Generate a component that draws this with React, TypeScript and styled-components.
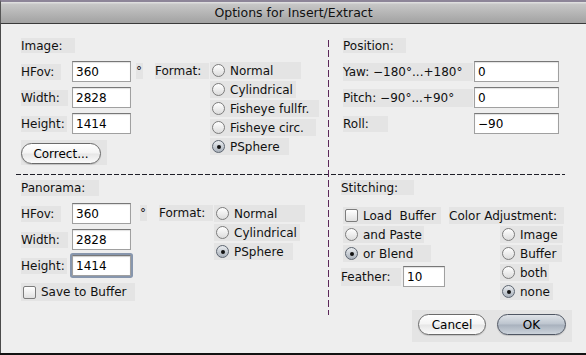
import styled, { createGlobalStyle } from 'styled-components';

const GlobalStyle = createGlobalStyle`
  html, body { margin: 0; padding: 0; background: #141414; }
  body { font-family: "DejaVu Sans", "Liberation Sans", sans-serif; font-size: 12px; color: #111; }
  * { box-sizing: border-box; }
`;

const Window = styled.div`
  width: 586px;
  height: 355px;
  display: flex;
  flex-direction: column;
  background: #121212;
  overflow: hidden;
`;

const TitleBar = styled.div`
  height: 24px;
  flex: none;
  border-top: 2px solid #8d8598;
  border-bottom: 1px solid #3a3a3a;
  border-left: 1px solid #555;
  background: linear-gradient(#e4e4e4, #c6c6c6 12%, #a2a2a2);
  display: flex;
  align-items: center;
  justify-content: center;
  font-size: 12.5px;
  color: #111;
`;

const Body = styled.div`
  height: 329px;
  flex: none;
  background: #eeeeee;
  border-left: 1px solid #4a4a4a;
  padding: 14px 14px 0 15px;
  display: grid;
  grid-template-columns: 312px 1px 1fr;
  grid-template-rows: 130px 12px 130px 32px;
`;

const Section = styled.div<{ $col: number; $row: number; $pad: number }>`
  grid-column: ${(p) => p.$col};
  grid-row: ${(p) => p.$row};
  padding-left: ${(p) => p.$pad}px;
  display: flex;
  flex-direction: column;
  align-items: flex-start;
`;

const VLine = styled.div`
  grid-column: 2;
  grid-row: 1 / 4;
  margin: 2px 0 -5px;
  background: repeating-linear-gradient(180deg, #5a2558 0 7px, transparent 7px 10px);
  position: relative;
  z-index: 1;
`;

const HLine = styled.div`
  grid-column: 1 / 4;
  grid-row: 2;
  align-self: center;
  height: 1px;
  margin-right: 7px;
  background: repeating-linear-gradient(90deg, #1e1e28 0 5px, transparent 5px 7px);
`;

const Box = styled.span<{ $w: number; $h?: number }>`
  display: inline-flex;
  align-items: center;
  flex: none;
  width: ${(p) => p.$w}px;
  height: ${(p) => p.$h ?? 16}px;
  background: #e4e4e4;
  white-space: pre;
`;

const FormRow = styled.div<{ $top: number }>`
  display: flex;
  align-items: flex-start;
  margin-top: ${(p) => p.$top}px;
`;

const Column = styled.div<{ $gap: number; $left?: number }>`
  display: flex;
  flex-direction: column;
  align-items: flex-start;
  gap: ${(p) => p.$gap}px;
  margin-left: ${(p) => p.$left ?? 0}px;
`;

const FieldRow = styled.div`
  display: flex;
  align-items: center;
  height: 21px;
`;

const LabelCell = styled.div<{ $w: number }>`
  width: ${(p) => p.$w}px;
  flex: none;
  display: flex;
`;

const TextInput = styled.input<{ $w: number; $focus?: boolean }>`
  width: ${(p) => p.$w}px;
  height: 21px;
  padding: 0 3px;
  font: inherit;
  color: #000;
  background: #fff;
  border: 1px solid #a0a0a0;
  border-top-color: #777;
  box-shadow: ${(p) =>
    p.$focus ? '0 0 0 2px #8796ad, inset 0 1px 1px rgba(0,0,0,0.2)' : 'inset 0 1px 1px rgba(0,0,0,0.12)'};
  outline: none;
  border-radius: ${(p) => (p.$focus ? '1px' : '0')};
`;

const Mark = styled(Box)`
  margin-top: 2px;
`;

const RadioRow = styled.div<{ $w: number }>`
  display: flex;
  align-items: center;
  gap: 5px;
  width: ${(p) => p.$w}px;
  height: 17px;
  padding-left: 2px;
  background: #e4e4e4;
  white-space: pre;
`;

const Radio = styled.span<{ $on?: boolean }>`
  width: 13px;
  height: 13px;
  flex: none;
  border-radius: 50%;
  border: 1px solid ${(p) => (p.$on ? '#5c6470' : '#7c7c7c')};
  background: ${(p) =>
    p.$on ? 'linear-gradient(#e9ecef, #a9b1bb)' : 'linear-gradient(#ffffff, #dcdcdc)'};
  display: flex;
  align-items: center;
  justify-content: center;
  &::after {
    content: '';
    width: 4px;
    height: 4px;
    border-radius: 50%;
    background: #111;
    display: ${(p) => (p.$on ? 'block' : 'none')};
  }
`;

const Check = styled.span`
  width: 13px;
  height: 13px;
  flex: none;
  border-radius: 2px;
  border: 1px solid #7c7c7c;
  background: linear-gradient(#ffffff, #e0e0e0);
`;

const ButtonBox = styled.div<{ $w: number; $top: number }>`
  width: ${(p) => p.$w}px;
  height: 25px;
  margin-top: ${(p) => p.$top}px;
  padding-top: 3px;
  background: #e4e4e4;
`;

const PillButton = styled.div<{ $w: number; $primary?: boolean }>`
  width: ${(p) => p.$w}px;
  height: 21px;
  border-radius: 11px;
  border: 1px solid ${(p) => (p.$primary ? '#4f5663' : '#6a6a6a')};
  background: ${(p) =>
    p.$primary
      ? 'linear-gradient(#dfe3e8, #bcc4ce 48%, #a8b1bd 52%, #ccd3db)'
      : 'linear-gradient(#ffffff, #f4f4f4 48%, #e6e6e6 52%, #fbfbfb)'};
  box-shadow: 0 1px 1px rgba(0, 0, 0, 0.15);
  display: flex;
  align-items: center;
  justify-content: center;
  font-size: 12px;
  color: #000;
`;

const ButtonPanel = styled.div`
  grid-column: 3;
  grid-row: 4;
  justify-self: end;
  width: 160px;
  height: 32px;
  padding: 4px 6px;
  display: flex;
  gap: 11px;
  background: #e4e4e4;
`;

type Field = { label: string; box: number; value: string; focus?: boolean };
type Opt = { label: string; w: number; on?: boolean };

const Fields = ({ rows, cell, width }: { rows: Field[]; cell: number; width: number }) => (
  <>
    {rows.map((r) => (
      <FieldRow key={r.label}>
        <LabelCell $w={cell}>
          <Box $w={r.box} $h={r.box > 100 ? 18 : 16}>{r.label}</Box>
        </LabelCell>
        <TextInput $w={width} $focus={r.focus} value={r.value} readOnly />
      </FieldRow>
    ))}
  </>
);

const Radios = ({ opts, left }: { opts: Opt[]; left: number }) => (
  <Column $gap={2} $left={left}>
    {opts.map((o) => (
      <RadioRow key={o.label} $w={o.w}>
        <Radio $on={o.on} />
        {o.label}
      </RadioRow>
    ))}
  </Column>
);

export default function App() {
  return (
    <Window>
      <GlobalStyle />
      <TitleBar>Options for Insert/Extract</TitleBar>
      <Body>
        <Section $col={1} $row={1} $pad={5}>
          <Box $w={54} $h={15}>Image:</Box>
          <FormRow $top={8}>
            <Column $gap={5}>
              <Fields
                cell={51}
                width={59}
                rows={[
                  { label: 'HFov:', box: 40, value: '360' },
                  { label: 'Width:', box: 47, value: '2828' },
                  { label: 'Height:', box: 46, value: '1414' },
                ]}
              />
              <ButtonBox $w={86} $top={1}>
                <PillButton $w={80}>Correct...</PillButton>
              </ButtonBox>
            </Column>
            <Mark $w={7} style={{ marginLeft: 5 }}>°</Mark>
            <Mark $w={54} style={{ marginLeft: 12 }}>Format:</Mark>
            <div style={{ marginTop: 1 }}>
              <Radios
                left={1}
                opts={[
                  { label: 'Normal', w: 91 },
                  { label: 'Cylindrical', w: 86 },
                  { label: 'Fisheye fullfr.', w: 109 },
                  { label: 'Fisheye circ.', w: 106 },
                  { label: 'PSphere', w: 79, on: true },
                ]}
              />
            </div>
          </FormRow>
        </Section>

        <VLine />

        <Section $col={3} $row={1} $pad={14}>
          <Box $w={63} $h={15}>Position:</Box>
          <FormRow $top={8}>
            <Column $gap={5}>
              <Fields
                cell={131}
                width={85}
                rows={[
                  { label: 'Yaw: −180°...+180°', box: 130, value: '0' },
                  { label: 'Pitch: −90°...+90°', box: 130, value: '0' },
                  { label: 'Roll:', box: 45, value: '−90' },
                ]}
              />
            </Column>
          </FormRow>
        </Section>

        <HLine />

        <Section $col={1} $row={3} $pad={5}>
          <Box $w={78} $h={16}>Panorama:</Box>
          <FormRow $top={7}>
            <Column $gap={5}>
              <Fields
                cell={51}
                width={59}
                rows={[
                  { label: 'HFov:', box: 40, value: '360' },
                  { label: 'Width:', box: 47, value: '2828' },
                  { label: 'Height:', box: 46, value: '1414', focus: true },
                ]}
              />
              <RadioRow $w={114} style={{ height: 18, marginTop: 2 }}>
                <Check />
                Save to Buffer
              </RadioRow>
            </Column>
            <Mark $w={7} style={{ marginLeft: 5 }}>°</Mark>
            <Mark $w={54} style={{ marginLeft: 12 }}>Format:</Mark>
            <div style={{ marginTop: 2 }}>
              <Radios
                left={1}
                opts={[
                  { label: 'Normal', w: 91 },
                  { label: 'Cylindrical', w: 86 },
                  { label: 'PSphere', w: 79, on: true },
                ]}
              />
            </div>
          </FormRow>
        </Section>

        <Section $col={3} $row={3} $pad={12}>
          <Box $w={73} $h={15}>Stitching:</Box>
          <FormRow $top={12}>
            <Column $gap={2} $left={2}>
              <RadioRow $w={98}>
                <Check />
                {'Load  Buffer'}
              </RadioRow>
              <RadioRow $w={81}>
                <Radio />
                and Paste
              </RadioRow>
              <RadioRow $w={88}>
                <Radio $on />
                or Blend
              </RadioRow>
              <FieldRow style={{ marginTop: 2, marginLeft: -2 }}>
                <LabelCell $w={62}>
                  <Box $w={60} $h={18}>Feather:</Box>
                </LabelCell>
                <TextInput $w={42} value="10" readOnly />
              </FieldRow>
            </Column>
            <Column $gap={2} $left={4}>
              <Box $w={115} $h={17}>Color Adjustment:</Box>
              <Radios
                left={51}
                opts={[
                  { label: 'Image', w: 63 },
                  { label: 'Buffer', w: 62 },
                  { label: 'both', w: 49 },
                  { label: 'none', w: 53, on: true },
                ]}
              />
            </Column>
          </FormRow>
        </Section>

        <ButtonPanel>
          <PillButton $w={68}>Cancel</PillButton>
          <PillButton $w={69} $primary>OK</PillButton>
        </ButtonPanel>
      </Body>
    </Window>
  );
}
